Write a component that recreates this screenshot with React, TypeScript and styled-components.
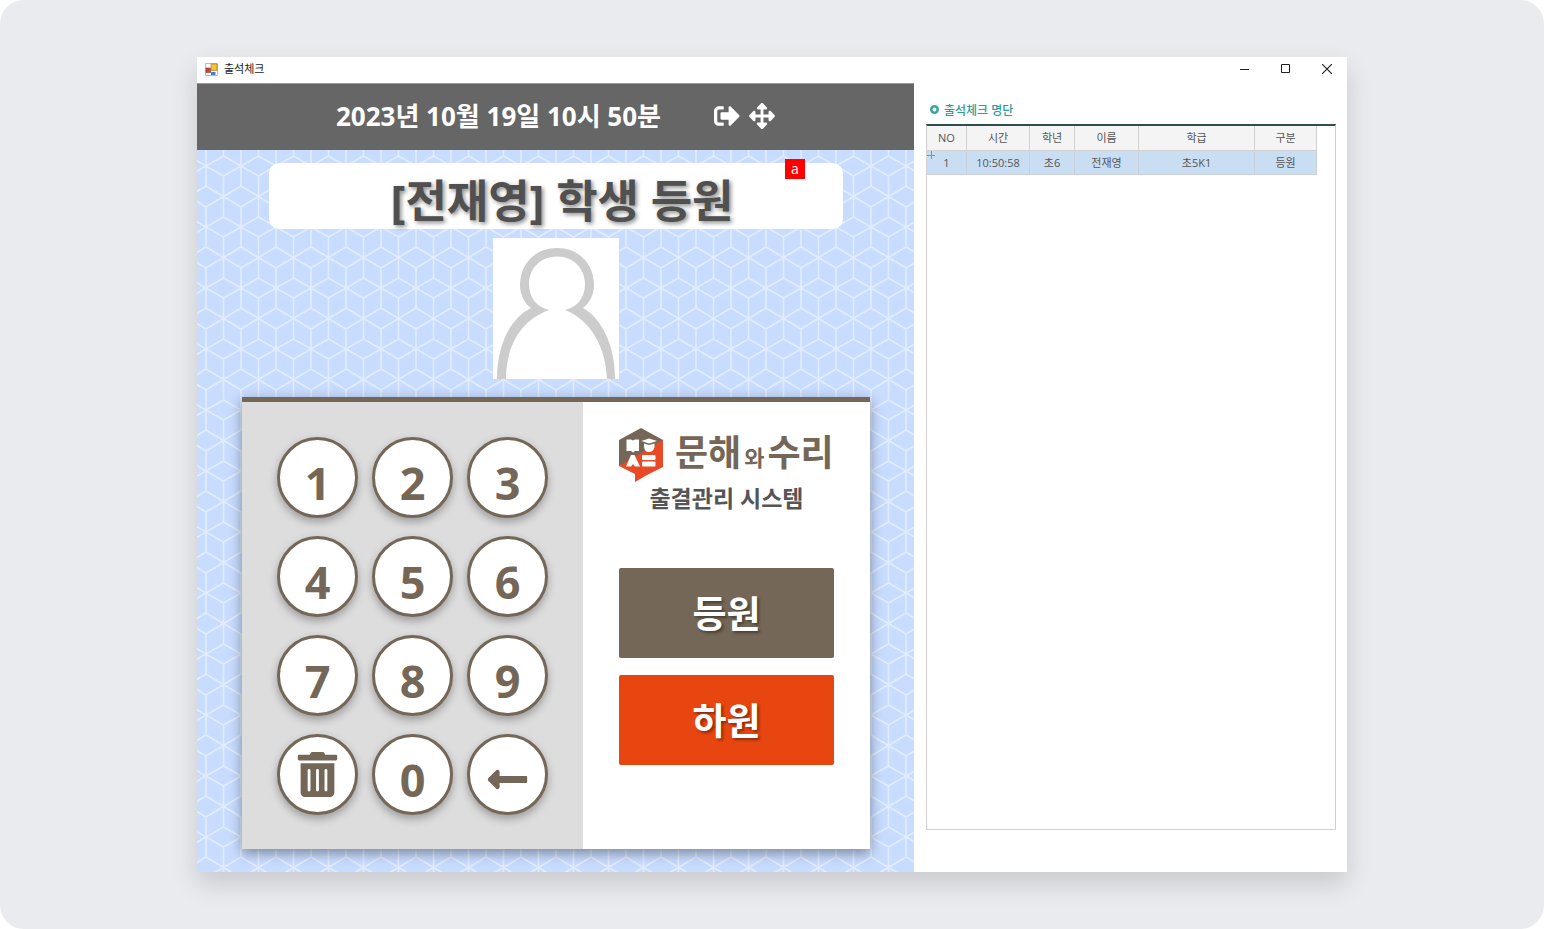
import React from "react";
import styled, { createGlobalStyle } from "styled-components";
import { FaArrowsAlt, FaLongArrowAltLeft, FaSignOutAlt, FaTrashAlt } from "react-icons/fa";

const ui = `"Open Sans", "Noto Sans CJK KR", sans-serif`;
const brown = "#756757";

const cubes = encodeURIComponent(
  `<svg xmlns="http://www.w3.org/2000/svg" width="35" height="61"><path d="M0 0v20M35 0v20M0 41v20M35 41v20M17.500 10v41M0 0L17.500 10L35 0M0 61L17.500 51L35 61M0 20L17.500 30.500L35 20M0 41L17.500 30.500L35 41" fill="none" stroke="#fff" stroke-opacity=".46" stroke-width="1.600"/></svg>`
);

const GlobalStyle = createGlobalStyle`
  *, *::before, *::after { box-sizing: border-box; }
  body { margin: 0; background: #fff; font-family: ${ui}; }
  button { font-family: inherit; margin: 0; padding: 0; border: 0; background: none; cursor: pointer; }
  h1, h2, p { margin: 0; }
`;

const Stage = styled.main`
  min-height: 100vh;
  padding: 57px 197px;
  border-radius: 24px;
  background: #eaebef;
`;

const AppWindow = styled.section`
  background: #fff;
  box-shadow: 0 12px 24px rgba(0, 0, 0, 0.14);
`;

const TitleBar = styled.header`
  display: flex;
  align-items: center;
  height: 26px;
  padding: 0 12px 2px 8px;
  gap: 6px;
  font-size: 11px;
  line-height: 16px;
  color: #222;
`;

const WindowName = styled.span`
  flex: 1;
`;

const WindowControls = styled.div`
  display: flex;
  gap: 25px;
`;

const WindowButton = styled.button`
  display: grid;
  place-items: center;
  width: 16px;
  height: 16px;
`;

const Body = styled.div`
  display: grid;
  grid-template-columns: 717fr 433fr;
`;

const Kiosk = styled.section`
  display: flex;
  flex-direction: column;
  background: #c8dcff url("data:image/svg+xml,${cubes}") 9px 83px;
`;

const ClockBar = styled.div`
  display: flex;
  align-items: center;
  justify-content: center;
  height: 67px;
  padding-bottom: 2px;
  border-top: 1px solid #999;
  background: #666;
  color: #fff;
`;

const Clock = styled.time`
  margin-right: 53px;
  font-size: 26px;
  line-height: 36px;
  font-weight: 700;
`;

const ClockButton = styled.button`
  display: grid;
  place-items: center;
  width: 26px;
  height: 26px;
  margin-right: 9px;
  color: #fff;
  font-size: 26px;

  &:last-child {
    margin-right: 0;
  }
`;

const KioskBody = styled.div`
  display: flex;
  flex-direction: column;
  align-items: center;
  padding: 13px 44px 23px 45px;
`;

const Notice = styled.div`
  position: relative;
  width: 574px;
  max-width: 100%;
  height: 66px;
  padding-left: 12px;
  border-radius: 10px;
  background: #fff;
  text-align: center;
`;

const NoticeText = styled.h1`
  color: #505050;
  font-size: 45px;
  line-height: 76px;
  font-weight: 700;
  text-shadow: 2px 2px 4px rgba(0, 0, 0, 0.45);
`;

const Badge = styled.span`
  position: absolute;
  top: -4px;
  right: 38px;
  width: 20px;
  height: 20px;
  background: #f00;
  color: #fff;
  font-size: 14px;
  line-height: 19px;
  text-align: center;
`;

const Avatar = styled.svg`
  display: block;
  width: 126px;
  height: 141px;
  margin: 9px 0 18px;
  background: #fff;
`;

const Card = styled.div`
  display: grid;
  grid-template-columns: minmax(0, 341fr) minmax(0, 287fr);
  align-self: stretch;
  border-top: 5px solid ${brown};
  background: #fff;
  box-shadow: 0 4px 12px rgba(0, 0, 0, 0.4);
`;

const Keypad = styled.div`
  display: grid;
  grid-template-columns: repeat(3, 81px);
  justify-content: center;
  gap: 18px 14px;
  padding: 35px 0 34px;
  background: #ddd;
`;

const Key = styled.button<{ $icon?: boolean }>`
  display: grid;
  place-items: center;
  width: 81px;
  height: 81px;
  padding-top: ${({ $icon }) => ($icon ? 0 : 10)}px;
  border: 3px solid ${brown};
  border-radius: 50%;
  background: #fff;
  box-shadow: 0 4px 8px rgba(0, 0, 0, 0.3);
  color: ${brown};
  font-size: 45px;
  line-height: 46px;
  font-weight: 700;
`;

const Actions = styled.div`
  display: flex;
  flex-direction: column;
  padding: 26px 36px 0;
`;

const Brand = styled.div`
  display: flex;
  align-items: center;
  gap: 11px;
  height: 54px;
`;

const BrandName = styled.p`
  display: flex;
  align-items: baseline;
  gap: 3px;
  color: ${brown};
  font-size: 36px;
  line-height: 48px;
  font-weight: 700;
  white-space: nowrap;
`;

const Particle = styled.span`
  font-size: 22px;
`;

const SystemName = styled.h2`
  margin-bottom: 54px;
  color: #555;
  font-size: 23px;
  line-height: 32px;
  font-weight: 700;
  text-align: center;
`;

const ActionButton = styled.button<{ $color: string }>`
  height: 90px;
  margin-bottom: 17px;
  padding-top: 2px;
  border-radius: 2px;
  background: ${({ $color }) => $color};
  color: #fff;
  font-size: 37px;
  line-height: 54px;
  font-weight: 700;
  text-shadow: 2px 2px 3px rgba(0, 0, 0, 0.4);
`;

const Roster = styled.section`
  display: flex;
  flex-direction: column;
  padding: 18px 11px 42px 12px;
`;

const RosterTitle = styled.h2`
  display: flex;
  align-items: center;
  gap: 5px;
  padding: 0 4px 3px;
  color: #2b9c9c;
  font-size: 12px;
  line-height: 20px;
  font-weight: 500;
`;

const RosterFrame = styled.div`
  flex: 1;
  border: 1px solid #d0d0d0;
  border-top: 2px solid #2f4f4f;
`;

const Table = styled.table`
  width: 390px;
  max-width: 100%;
  table-layout: fixed;
  border-collapse: separate;
  border-spacing: 0;
  font-size: 11px;
  line-height: 16px;
  color: #555;
`;

const HeadCell = styled.th`
  height: 25px;
  padding: 0;
  border: 1px solid #d0d0d0;
  border-width: 0 1px 1px 0;
  background: #f4f4f4;
  font-weight: 400;
`;

const Cell = styled.td`
  position: relative;
  height: 24px;
  padding: 0;
  border: 1px solid #c9d0d8;
  border-width: 0 1px 1px 0;
  background: #cadef3;
  text-align: center;
`;

const RowMark = styled.svg`
  position: absolute;
  top: 0;
  left: 0;
`;

const columns = [
  { name: "NO", width: 40 },
  { name: "시간", width: 63 },
  { name: "학년", width: 45 },
  { name: "이름", width: 64 },
  { name: "학급", width: 116 },
  { name: "구분", width: 62 },
];
const rows = [["1", "10:50:58", "초6", "전재영", "초5K1", "등원"]];

const AppIcon = () => (
  <svg width="13" height="13" viewBox="0 0 13 13" aria-hidden="true">
    <path d="M.5.5h12v12H.5z" fill="#fff" stroke="#bbb" />
    <path d="M1 5h4.500v4.500H1z" fill="#c6473c" stroke="#8d3029" strokeWidth=".6" />
    <path d="M6 1h6v6.500H6z" fill="#f5c332" stroke="#a98222" strokeWidth=".7" />
    <path d="M6 9h4.500v3H6z" fill="#3f7fd6" />
  </svg>
);

const BrandMark = () => (
  <svg width="45" height="54" viewBox="0 0 45 54" aria-hidden="true">
    <path d="M22 0L44 12V28L0 38V12z" fill={brown} />
    <path d="M44 12V39L28 47L16 54V46L0 38z" fill="#e84a25" />
    <path d="M7.500 11.500H12L14 12.500L16 11.500H20V23H16L14 24.500L12 23H7.500z" fill="#fff" />
    <path d="M22.500 13L30 10.500L38 13L30 15.500z" fill="#fff" />
    <path d="M25 15.500L30 17L35.500 15.500V19Q34.500 24 30 24T25 19z" fill="#fff" />
    <path d="M12 27H15.500L21 38.500H16L14 36L12 38.500H7z" fill="#fff" />
    <rect x="23" y="27" width="13.500" height="5" rx="1" fill="#fff" />
    <rect x="23" y="33.500" width="13.500" height="5" rx="1" fill="#fff" />
  </svg>
);

export default function App() {
  return (
    <Stage>
      <GlobalStyle />
      <AppWindow>
        <TitleBar>
          <AppIcon />
          <WindowName>출석체크</WindowName>
          <WindowControls>
            <WindowButton aria-label="최소화">
              <svg width="10" height="10"><path d="M0 5.500h9" stroke="#222" /></svg>
            </WindowButton>
            <WindowButton aria-label="최대화">
              <svg width="10" height="10"><path d="M.5 .5h8v8h-8z" fill="none" stroke="#222" /></svg>
            </WindowButton>
            <WindowButton aria-label="닫기">
              <svg width="10" height="10"><path d="M0 0L10 10M10 0L0 10" stroke="#222" strokeWidth="1.200" /></svg>
            </WindowButton>
          </WindowControls>
        </TitleBar>
        <Body>
          <Kiosk>
            <ClockBar>
              <Clock dateTime="2023-10-19T10:50">2023년 10월 19일 10시 50분</Clock>
              <ClockButton aria-label="나가기"><FaSignOutAlt /></ClockButton>
              <ClockButton aria-label="전체 화면"><FaArrowsAlt /></ClockButton>
            </ClockBar>
            <KioskBody>
              <Notice>
                <NoticeText>[전재영] 학생 등원</NoticeText>
                <Badge>a</Badge>
              </Notice>
              <Avatar viewBox="0 0 126 141" aria-hidden="true">
                <path
                  d="M64 10C42 10 27 26 27 47C27 57 32 66 38 70C18 80 4 106 4 141H13C13 108 28 82 56 72C44 69 36 60 36 46C36 31 47 18.500 64 18.500S92 31 92 46C92 60 84 69 72 72C98 82 113 110 114 141H122C122 106 108 80 90 70C96 66 101 57 101 47C101 26 86 10 64 10z"
                  fill="#ccc"
                />
              </Avatar>
              <Card>
                <Keypad>
                  {["1", "2", "3", "4", "5", "6", "7", "8", "9"].map((n) => (
                    <Key key={n}>{n}</Key>
                  ))}
                  <Key $icon aria-label="모두 지우기"><FaTrashAlt /></Key>
                  <Key>0</Key>
                  <Key aria-label="한 글자 지우기"><FaLongArrowAltLeft /></Key>
                </Keypad>
                <Actions>
                  <Brand>
                    <BrandMark />
                    <BrandName>문해<Particle>와</Particle>수리</BrandName>
                  </Brand>
                  <SystemName>출결관리 시스템</SystemName>
                  <ActionButton $color={brown}>등원</ActionButton>
                  <ActionButton $color="#e84610">하원</ActionButton>
                </Actions>
              </Card>
            </KioskBody>
          </Kiosk>
          <Roster>
            <RosterTitle>
              <svg width="9" height="12" aria-hidden="true">
                <circle cx="4.500" cy="4.500" r="3.200" fill="none" stroke="#3aa3a3" strokeWidth="2.500" />
              </svg>
              출석체크 명단
            </RosterTitle>
            <RosterFrame>
              <Table>
                <colgroup>
                  {columns.map((c) => <col key={c.name} width={c.width} />)}
                </colgroup>
                <thead>
                  <tr>{columns.map((c) => <HeadCell key={c.name} scope="col">{c.name}</HeadCell>)}</tr>
                </thead>
                <tbody>
                  {rows.map((row) => (
                    <tr key={row[0]}>
                      {row.map((value, i) => (
                        <Cell key={i}>
                          {i === 0 && (
                            <RowMark width="9" height="9" aria-hidden="true">
                              <path d="M0 4.500h8M4.500 0v8" stroke="#e8705a" />
                            </RowMark>
                          )}
                          {value}
                        </Cell>
                      ))}
                    </tr>
                  ))}
                </tbody>
              </Table>
            </RosterFrame>
          </Roster>
        </Body>
      </AppWindow>
    </Stage>
  );
}
